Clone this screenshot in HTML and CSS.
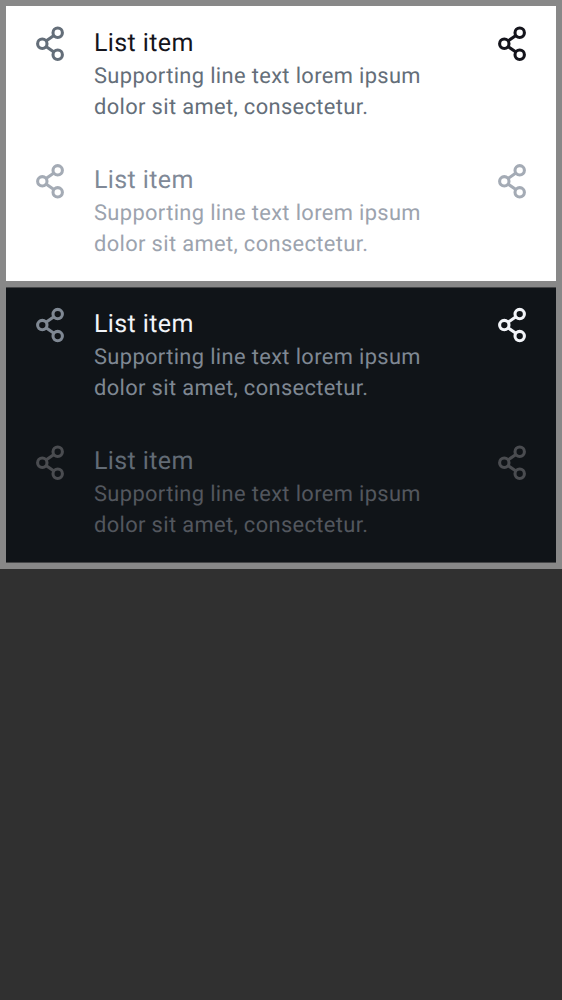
FILE: index.html
```
<!DOCTYPE html>
<html lang="en">
<head>
<meta charset="utf-8">
<title>List items</title>
<link rel="stylesheet" href="styles.css">
</head>
<body>
<svg class="defs" width="0" height="0"><symbol id="share" viewBox="0 0 30 36"><g fill="none" stroke="currentColor" stroke-width="3.1"><circle cx="7.3" cy="17.75" r="4.7"/><circle cx="22.7" cy="6.75" r="4.7"/><circle cx="22.7" cy="28.75" r="4.7"/><path d="M11 15 18.9 9.5M11 20.5 18.9 26"/></g></symbol></svg>
<main class="board">
<ul class="panel light">
<li class="item"><svg class="icon lead"><use href="#share"/></svg><div class="copy"><h2 class="title">List item</h2><p class="support">Supporting line text lorem ipsum<br>dolor sit amet, consectetur.</p></div><svg class="icon trail"><use href="#share"/></svg></li>
<li class="item disabled"><svg class="icon lead"><use href="#share"/></svg><div class="copy"><h2 class="title">List item</h2><p class="support">Supporting line text lorem ipsum<br>dolor sit amet, consectetur.</p></div><svg class="icon trail"><use href="#share"/></svg></li>
</ul>
<ul class="panel dark">
<li class="item"><svg class="icon lead"><use href="#share"/></svg><div class="copy"><h2 class="title">List item</h2><p class="support">Supporting line text lorem ipsum<br>dolor sit amet, consectetur.</p></div><svg class="icon trail"><use href="#share"/></svg></li>
<li class="item disabled"><svg class="icon lead"><use href="#share"/></svg><div class="copy"><h2 class="title">List item</h2><p class="support">Supporting line text lorem ipsum<br>dolor sit amet, consectetur.</p></div><svg class="icon trail"><use href="#share"/></svg></li>
</ul>
</main>
</body>
</html>
```
FILE: styles.css
```
* { box-sizing: border-box; margin: 0; padding: 0; }
body { background: #303030; font-family: Roboto, sans-serif; min-height: 1000px; text-rendering: geometricPrecision; }
.defs { display: block; }
.board { display: flex; flex-direction: column; gap: 6px; padding: 6px; height: 569px; background: #888; }
.panel { list-style: none; height: 275px; flex: none; }
.item { display: flex; height: 137px; padding: 20px 29px 0; }
.icon { width: 30px; height: 36px; flex: none; color: var(--lead); }
.copy { flex: 1; padding-left: 29px; }
.light .copy { padding-top: 1px; }
.light .disabled .icon { transform: translateY(.6px); }
.dark .item:first-child .icon { transform: translateY(-.7px); }
.title { font-size: 25px; line-height: 33px; font-weight: 400; letter-spacing: .39px; color: var(--title); }
.support { font-size: 21.875px; line-height: 31px; letter-spacing: .36px; padding-top: 1px; color: var(--support); }
.icon.trail { color: var(--trail); }
.light { background: #fff; --lead: #646e79; --title: #14141c; --support: #646e79; --trail: #14141c; }
.light .disabled { --lead: #a4abb5; --title: #808997; --support: #9ca3ae; --trail: #a4abb5; }
.dark { height: 276px; border: solid #454648; border-width: 1px 0; background: #101418; --lead: #7f8893; --title: #f2f4f8; --support: #7f8893; --trail: #f2f4f8; }
.dark .disabled { --lead: #4a4c50; --title: #626b75; --support: #53575e; --trail: #4a4c50; }
```
